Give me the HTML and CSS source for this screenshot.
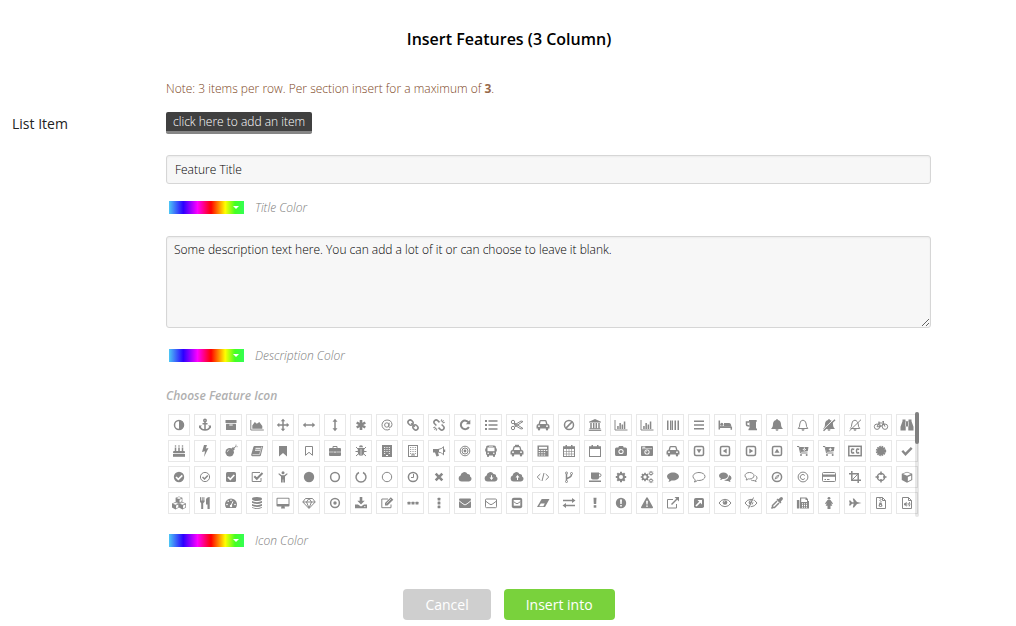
FILE: index.html
```
<!DOCTYPE html>
<html lang="en">
<head>
<meta charset="utf-8">
<meta name="viewport" content="width=device-width, initial-scale=1">
<title>Insert Features (3 Column)</title>
<link rel="stylesheet" href="styles.css">
</head>
<body>
<form class="dialog">
  <h1 class="dialog-title">Insert Features (3 Column)</h1>
  <div class="form-grid">
    <p class="note">Note: 3 items per row. Per section insert for a maximum of <strong>3</strong>.</p>
    <div class="row-label">List Item</div>
    <div class="fields">
      <button type="button" class="add-item">click here to add an item</button>
      <input class="text-field" type="text" aria-label="Feature title" value="Feature Title">
      <div class="color-row title-color">
        <button type="button" class="swatch" id="title-color" aria-labelledby="title-color-label"></button>
        <label class="hint" id="title-color-label" for="title-color">Title Color</label>
      </div>
      <textarea class="text-area" aria-label="Feature description">Some description text here. You can add a lot of it or can choose to leave it blank.</textarea>
      <div class="color-row description-color">
        <button type="button" class="swatch" id="desc-color" aria-labelledby="desc-color-label"></button>
        <label class="hint" id="desc-color-label" for="desc-color">Description Color</label>
      </div>
      <h2 class="picker-title">Choose Feature Icon</h2>
      <div class="picker">
        <div class="icon-grid" id="icon-grid"></div>
        <div class="scroll-track"><div class="scroll-thumb"></div></div>
      </div>
      <div class="color-row icon-color">
        <button type="button" class="swatch" id="icon-color" aria-labelledby="icon-color-label"></button>
        <label class="hint" id="icon-color-label" for="icon-color">Icon Color</label>
      </div>
    </div>
  </div>
  <div class="actions">
    <button type="button" class="btn btn-cancel">Cancel</button>
    <button type="button" class="btn btn-insert">Insert into</button>
  </div>
</form>
<script src="icons.js"></script>
</body>
</html>
```
FILE: styles.css
```
* { box-sizing: border-box; }
body {
  margin: 0;
  background: #fff;
  color: #222;
  font-family: "Open Sans", sans-serif;
  font-size: 12px;
  font-weight: 300;
}
button, input, textarea { font: inherit; margin: 0; }
.dialog { padding: 27px 0 6px; }
.dialog-title {
  margin: 0 0 27px;
  padding-left: 2px;
  text-align: center;
  font-size: 16px;
  line-height: 24px;
  font-weight: 600;
  color: #000;
}
.form-grid {
  display: grid;
  grid-template-columns: 154px minmax(0, 1fr);
  row-gap: 12px;
  padding: 0 85px 0 12px;
}
.note {
  grid-column: 2;
  margin: 0;
  line-height: 22px;
  color: #7c4522;
}
.note strong { font-weight: 700; color: #97694a; }
.row-label {
  font-size: 14px;
  font-weight: 400;
  line-height: 24px;
  color: #222;
}
.fields {
  display: flex;
  flex-direction: column;
  align-items: flex-start;
}
.add-item {
  height: 22px;
  padding: 0 7px;
  border: 0;
  border-bottom: 3px solid #868686;
  border-radius: 2px;
  background: #404040;
  color: #fff;
  line-height: 19px;
}
.text-field, .text-area {
  width: 100%;
  border: 1px solid #d6d6d6;
  border-radius: 3px;
  background: #f7f7f7;
  box-shadow: inset 0 1px 2px rgba(0, 0, 0, .05);
  color: #000;
  outline: none;
}
.text-field {
  height: 29px;
  margin-top: 21px;
  padding: 0 8px;
}
.text-area {
  display: block;
  height: 92px;
  margin-top: 18px;
  padding: 4px 7px;
  line-height: 18px;
  resize: vertical;
}
.color-row {
  display: flex;
  align-items: center;
  gap: 11px;
  height: 21px;
  padding-left: 3px;
}
.title-color, .icon-color { margin-top: 13px; }
.description-color { margin-top: 17px; }
.swatch {
  display: flex;
  align-items: center;
  justify-content: flex-end;
  width: 75px;
  height: 13px;
  padding: 0 5px;
  border: 0;
  background: linear-gradient(90deg, #4cc8f5 0%, #2a00ff 19%, #f0f 38%, #f00 56%, #ff0 75%, #4f2 88%, #3f5 100%);
}
.swatch::after {
  content: "";
  border: 3px solid transparent;
  border-top-color: #fff;
  border-bottom: 0;
}
.hint {
  font-style: italic;
  line-height: 21px;
  color: #7c7c7c;
}
.picker-title {
  margin: 19px 0 6px;
  font-size: 12px;
  line-height: 21px;
  font-style: italic;
  font-weight: 600;
  color: #b0b0b0;
}
.picker {
  position: relative;
  width: 100%;
  max-width: 753px;
  height: 105px;
  padding: 2px 1px 0 2px;
  overflow: hidden;
}
.icon-grid {
  display: grid;
  grid-template-columns: repeat(auto-fill, 22px);
  gap: 4px;
}
.icon-btn {
  display: grid;
  place-items: center;
  width: 22px;
  height: 22px;
  padding: 0;
  border: 1px solid #e8e8e8;
  background: #fff;
  color: #888;
}
.icon-btn svg { display: block; width: 14px; height: 14px; fill: currentColor; overflow: visible; }
.icon-btn .s { fill: none; stroke: currentColor; stroke-width: 1; }
.icon-btn .m { fill: none; stroke: currentColor; stroke-width: 1.5; }
.icon-btn .b { fill: none; stroke: currentColor; stroke-width: 2; }
.icon-btn .w { fill: #fff; }
.icon-btn .ws { fill: none; stroke: #fff; stroke-width: 1; }
.icon-btn .wt { fill: none; stroke: #fff; stroke-width: .6; }
.icon-btn .wm { fill: none; stroke: #fff; stroke-width: 1.7; }
.scroll-track {
  position: absolute;
  top: 0;
  right: 0;
  width: 4px;
  height: 100%;
  border-radius: 2px;
  background: rgba(60, 60, 60, .12);
}
.scroll-thumb { height: 32px; border-radius: 2px; background: #808080; }
.actions {
  display: flex;
  justify-content: center;
  gap: 13px;
  margin-top: 38px;
  padding-left: 2px;
}
.btn {
  height: 31px;
  padding: 0 22px;
  border: 0;
  border-radius: 4px;
  color: #fff;
  font-size: 14px;
  font-weight: 500;
}
.btn-cancel { background: #cfcfcf; }
.btn-insert { background: #79d23c; }
```
FILE: icons.js
```
// Each icon is drawn on a 14 x 14 grid. Classes: s/m/b = thin/medium/bold stroke,
// w = white fill, wt/ws/wm = white strokes.
const p = (d, c) => `<path d="${d}"${c ? ` class="${c}"` : ''}/>`;
const c = (x, y, r, k) => `<circle cx="${x}" cy="${y}" r="${r}"${k ? ` class="${k}"` : ''}/>`;
const r = (x, y, w, h, k, rx = 0) => `<rect x="${x}" y="${y}" width="${w}" height="${h}" rx="${rx}"${k ? ` class="${k}"` : ''}/>`;

const bell = 'M7 1c.6 0 .9.3.9.9C10 2.4 11 4 11 6c0 2.300 .6 3.500 1.700 4.500V11H1.300v-.5C2.400 9.500 3 8.300 3 6c0-2 1-3.600 3.100-4.100C6.100 1.300 6.400 1 7 1z';
const bellLine = p('M7 2.100Q3.800 2.600 3.800 6T2.200 10.500h9.600Q10.200 9 10.200 6T7 2.100z', 's');
const clapper = p('M5.500 11.300h3a1.500 1.500 0 0 1-3 0z');
const car = p('M3.300 3.200Q3.600 2 4.800 2h4.400q1.200 0 1.500 1.200l.8 2.800Q13.500 6.200 13.500 8v2.500h-1.300v.8q0 1.200-1.200 1.200t-1.200-1.200v-.8H4.200v.8q0 1.200-1.200 1.200t-1.200-1.200v-.8H.5V8q0-1.800 2-2z')
  + p('M4 6l.7-2.700h4.600L10 6z', 'w') + c(3, 8.2, .9, 'w') + c(11, 8.2, .9, 'w');
const cloud = p('M3.600 11.500a3.100 3.100 0 0 1-1-6A3.700 3.700 0 0 1 9.500 3.900a2.300 2.300 0 0 1 2.600 2.500A2.700 2.700 0 0 1 11 11.500z');
const chart = p('M1 2v10h12.500', 's') + r(3.2, 8, 1.5, 3) + r(5.400, 5, 1.5, 6) + r(7.600, 6.500, 1.5, 4.500) + r(9.800, 3.500, 1.5, 7.500);
const box = r(2.500, 2.500, 9, 9, 'm', 1.5);
const cart = p('M1 2.500h2l1.500 6.500h7', 's') + p('M3.500 3h9l-.7 4.300-7.300.7z') + c(5, 11, 1) + c(10.700, 11, 1);
const briefcase = r(1, 4, 12, 8, '', 1) + p('M5 4V2.500h4V4', 's') + p('M1 8h4.700M8.300 8H13', 'wt') + r(6.300, 7.500, 1.400, 1.200, 'w');
const cal = r(1.500, 3, 11, 9.500, 's') + r(1, 2.500, 12, 2.500) + r(3.500, 1, 1.500, 2.800) + r(9, 1, 1.500, 2.800);
const disc = c(7, 7, 5.200);
const ring = c(7, 7, 4.500, 'm');
const bubble = 'M7 2.500c3.300 0 6 1.700 6 4s-2.700 4-6 4q-.8 0-1.500-.1Q4 11.800 2.300 12q.9-1 1-2.200Q1 8.600 1 6.500c0-2.300 2.700-4 6-4z';
const doublebubble = ['M5.500 2.500c2.500 0 4.500 1.400 4.500 3.200S8 9 5.500 9l-1-.1Q3.500 9.900 2 10q.7-.8.8-1.700Q1 7.400 1 5.700c0-1.800 2-3.200 4.500-3.200z', 'M11 5q2.500 1 2.500 3 0 1.500-1.500 2.400.1 1 .8 1.600-1.700 0-2.600-1.100Q7.500 11.200 6 10q4.500 0 5-5z'];
const gear = (x, y, k) => `<g transform="translate(${x} ${y}) scale(${k})">` + c(0, 0, 3, 'b')
  + p('M0-5.200V-3M0 3v2.200M-5.200 0H-3M3 0h2.200M-3.700-3.700l1.600 1.600M2.100 2.100l1.600 1.600M-3.700 3.700l1.600-1.600M2.100-2.100l1.600-1.600', 'b') + '</g>';
const page = p('M2.500 1.500h6l3 3v8h-9zM8.500 1.500v3h3', 's');
const bike = c(3, 8.700, 2.700, 's') + c(11, 8.700, 2.700, 's') + p('M3 8.700L5 5h4.500L7 8.700zM9 3.500l2 5.200M8.500 3.500H10M5 5l2 3.700M4 4.200h2.200', 's');
const cube = (x, y, k) => `<g transform="translate(${x} ${y}) scale(${k})">` + p('M0-5l5 2v5.800L0 5.500l-5-2.700V-3z') + p('M-3.800-2.800L0-4.200l3.800 1.400L0-1.200z', 'w') + p('M.8 0L4-1.400v3.700L.8 4z', 'w') + '</g>';
const eye = p('M1 7q2.300-3.700 6-3.700T13 7q-2.300 3.700-6 3.700T1 7z', 's') + c(7, 6.500, 2.300) + p('M5.900 6.400q0-1.200 1.200-1.200', 'wt');

const icons = [
  ['adjust', c(7, 7, 4.500, 'm') + p('M7 2.500v9a4.500 4.500 0 0 0 0-9z')],
  ['anchor', c(7, 2.500, 1.200, 'm') + p('M7 4v8M4.500 5.700h5M2 8.500q.7 3.500 5 3.500t5-3.500', 'm') + p('M1 7.500h3L1 10.500zM13 7.500h-3l3 3z')],
  ['archive', r(1.500, 2, 11, 3) + r(2, 5.700, 10, 6.300, '', .5) + r(5.300, 6.500, 3.400, 1, 'w')],
  ['area chart', p('M.8 2v10h13', 's') + p('M2.300 10.800V7.500L4.800 4l2 1.800L9.300 4l3 4v2.800z')],
  ['arrows', p('M7 2.500v9M2.500 7h9', 'm') + p('M7 .8l2.300 2.500H4.700zM7 13.200l2.300-2.500H4.700zM.8 7l2.500-2.300v4.600zM13.200 7l-2.500-2.300v4.600z')],
  ['arrows horizontal', p('M3 7h8', 'm') + p('M.8 7l2.900-2.500v5zM13.200 7l-2.900-2.500v5z')],
  ['arrows vertical', p('M7 3v8', 'm') + p('M7 .8l2.500 2.900h-5zM7 13.200l2.500-2.900h-5z')],
  ['asterisk', `<path d="M7 2v10M2.700 4.500l8.600 5M11.300 4.500l-8.600 5" fill="none" stroke="currentColor" stroke-width="2.600"/>`],
  ['at', c(6.800, 7, 2.200, 's') + p('M9.200 4.700l-.5 3.500q0 1.200 1 1.200 2.300 0 2.300-3Q11.500 2 7 2a5 5 0 1 0 3 9', 's')],
  ['chain', `<g transform="rotate(45 7 7)">` + r(.8, 4.800, 5.400, 4.400, 'm', 2.2) + r(7.800, 4.800, 5.400, 4.400, 'm', 2.2) + p('M4.500 7h5', 'm') + '</g>'],
  ['chain broken', `<g transform="rotate(45 7 7)">` + p('M5.500 4.800H3a2.200 2.200 0 0 0 0 4.400h2.500M8.500 4.800H11a2.200 2.200 0 0 1 0 4.400H8.500', 'm') + p('M7 .5V3M9 1l-.8 2M5 1l.8 2M7 11v2.500M9 13l-.8-2M5 13l.8-2', 's') + '</g>'],
  ['rotate', p('M10.700 4.500A4.300 4.300 0 1 0 10.900 9', 'b') + p('M12.300 1.800v4.500H7.800z')],
  ['list', p('M4.500 3h9M4.500 7h9M4.500 11h9', 'm') + p('M1 3h2M1 7h2M1 11h2', 'b')],
  ['scissors', c(3, 4, 1.700, 's') + c(3, 10, 1.700, 's') + p('M4.500 5l8.500 5.500-2 .5L4.500 7zM4.500 9L13 3.500 11 3 4.500 7', 's')],
  ['car', car],
  ['ban', ring + p('M3.900 10.100l6.200-6.200', 'm')],
  ['bank', p('M7 1l6 2.700v.8H1v-.8z') + p('M3 5v5.500M5.700 5v5.500M8.300 5v5.500M11 5v5.500', 'm') + r(1.500, 10.200, 11, 1) + r(.8, 11.700, 12.400, 1.200)],
  ['bar chart', chart], ['bar chart outline', chart],
  ['barcode', `<path d="M1.500 2.500v9.500M4.500 2.500v9.500M6.500 2.500v9.500M9.500 2.500v9.500M12.500 2.500v9.500" class="s"/><path d="M2.500 2.500v9.500M5.500 2.500v9.500M8.500 2.500v9.500M11.500 2.500v9.500" class="s" opacity=".5"/>`],
  ['bars', p('M2 3.200h10M2 7h10M2 10.800h10', 'm')],
  ['bed', p('M1.300 2.500v9M.7 9.300h12.600v2.500', 'm') + c(3.800, 6.200, 1.500) + p('M6 5h5q2 0 2.300 3H6zM2 7.800h11v1H2z')],
  ['beer', p('M5 2h7.700v1.500l-.7.700v5.800l1 1V12.200H4.500V11l1-1V4.200L5 3.500z') + p('M5.500 4H2.500v2.500q0 1.500 3 1.500', 'm')],
  ['bell', p(bell) + clapper],
  ['bell outline', bellLine + clapper],
  ['bell slash', p(bell) + clapper + p('M1 11.800L12 1', 'ws') + p('M1.500 12.800L13 1.700', 'm')],
  ['bell slash outline', bellLine + clapper + p('M1 11.800L12 1', 'wt') + p('M1.500 12.800L13 1.700', 's')],
  ['bicycle', bike],
  ['binoculars', p('M2.500 1.500h3v1.800h3V1.500h3v1.800l2 5.500v3.700H8.300V8.500H5.700v4H.5V8.800l2-5.500z') + p('M5.500 3.500v5M8.500 3.500v5', 'wt')],

  ['birthday cake', r(1, 7, 12, 2.300, '', 1) + r(1, 10, 12, 2.800) + p('M3.500 3.500V7M7 3.500V7M10.500 3.500V7', 'm') + c(3.500, 2, .8) + c(7, 2, .8) + c(10.500, 2, .8)],
  ['bolt', p('M6 1h3L7.800 4.500l2.700-.5L6 13l1-5.700-3 .7z')],
  ['bomb', c(5.700, 8.300, 4.200) + p('M7.500 4.500l1.500-1.500 2 2L9.500 6.500z') + p('M10 4q1-1.800 2-1.300M12 .7v1M13.500 2.700h-1', 's') + p('M3.300 8q.2-2 2-2.200', 'wt')],
  ['book', p('M4.500 2h8.700l-2.400 9.500q-.2.800-1.200.8H2.300Q.8 12 1.300 10.300L3.300 3.200Q3.700 2 4.500 2z') + p('M5.500 4.300h5M5 6.200h5', 'ws') + p('M2.500 10.600h7l2.200-8', 'wt')],
  ['bookmark', p('M3 2h8v10.500L7 9l-4 3.500z')],
  ['bookmark outline', p('M3.500 2.500h7v8.800L7 8.300l-3.500 3z', 's')],
  ['briefcase', briefcase],
  ['bug', p('M5 3.200a2 2 0 0 1 4 0z') + p('M3.800 4h6.400v4q0 3.500-3.200 3.800Q3.800 11.500 3.800 8z') + p('M1.500 7.500H4M10 7.500h2.500M2 3l2 2M12 3l-2 2M2 12l2.200-2M12 12L9.800 10', 's') + p('M7 5v6.500', 'wt')],
  ['building', r(2, 1, 10, 12) + p('M4.200 3.500h1M6.500 3.500h1M8.800 3.500h1M4.200 5.500h1M6.500 5.500h1M8.800 5.500h1M4.200 7.500h1M6.500 7.500h1M8.800 7.500h1M4.200 9.500h1M8.800 9.500h1M6 11.500h2', 'ws')],
  ['building outline', r(2.500, 1.500, 9, 11, 's') + p('M4.200 3.500h1M6.500 3.500h1M8.800 3.500h1M4.200 5.500h1M6.500 5.500h1M8.800 5.500h1M4.200 7.500h1M6.500 7.500h1M8.800 7.500h1M4.200 9.500h1M8.800 9.500h1M6 12v-2h2v2', 's')],
  ['bullhorn', p('M1 5h5q3.500 0 6-3v9.500q-2.500-3-6-3l1 3.300-2.500.7L3 8.500H1z') + p('M7 5.700q2.300-.3 4-2v6q-1.700-1.700-4-2z', 'w') + r(12, 5.500, 1.200, 2.500)],
  ['bullseye', c(7, 7, 4.800, 's') + c(7, 7, 3, 's') + c(7, 7, 1.400)],
  ['bus', r(2, 1.500, 10, 10, '', 2) + r(3.500, 3.500, 7, 3.700, 'w') + r(5, 2.200, 4, .5, 'w') + c(4.200, 9.300, .8, 'w') + c(9.800, 9.300, .8, 'w') + r(3, 11, 2, 1.800) + r(9, 11, 2, 1.800) + r(1.200, 4.500, 1, 3) + r(11.800, 4.500, 1, 3)],
  ['taxi', r(5, .8, 4, 2) + car],
  ['calculator', r(1.500, 1.500, 11, 11) + r(3, 2.800, 8, 2, 'w') + p('M2.700 6.500h1.500M5.200 6.500h1.500M7.700 6.500h1.500M10.200 6.500h1.200M2.700 8.700h1.500M5.200 8.700h1.500M7.700 8.700h1.500M2.700 11h1.500M5.200 11h1.500M7.700 11h1.500', 'ws')],
  ['calendar', cal + `<path d="M2 7.500h10M2 10h10M4.500 5v7M7 5v7M9.500 5v7" fill="none" stroke="currentColor" stroke-width=".6"/>`],
  ['calendar outline', cal],
  ['camera', p('M2.500 3.500h1.800L5 2h4l.7 1.500h1.800Q13 3.500 13 5v5.500q0 1.500-1.500 1.500h-9Q1 12 1 10.500V5q0-1.500 1.500-1.500z') + c(7, 7.500, 2.600, 'w') + c(7, 7.500, 1.600)],
  ['camera retro', r(1, 2, 12, 10, '', 1) + p('M2 4.700h10', 'wt') + r(2.300, 2.700, 3, 1, 'w') + c(7, 8, 2.600, 'w') + c(7, 8, 1.700) + p('M6 8q0-1 1-1', 'wt')],
  ['automobile', car],
  ['caret square down', box + p('M4.500 5.300h5L7 9.200z')],
  ['caret square left', box + p('M8.700 4.500v5L4.800 7z')],
  ['caret square right', box + p('M5.300 4.500v5L9.200 7z')],
  ['caret square up', box + p('M4.500 8.700h5L7 4.800z')],
  ['cart arrow down', cart + p('M8.300 3.500v2M6.800 5l1.500 1.500L9.800 5', 'ws')],
  ['cart plus', cart + p('M8.300 3.800v3M6.800 5.300h3', 'ws')],
  ['closed captions', r(.8, 2.300, 12.400, 9.400, 'm') + p('M6.200 5.500Q3.500 3.800 3.500 7t2.700 1.500M11.200 5.500Q8.500 3.800 8.500 7t2.700 1.500', 'm')],
  ['certificate', `<circle cx="7" cy="7" r="4"/><circle cx="7" cy="7" r="4.200" fill="none" stroke="currentColor" stroke-width="2" stroke-dasharray="1.500 .7"/>`],
  ['check', `<path d="M2.300 6.800l3.200 3.400 6.200-6.400" fill="none" stroke="currentColor" stroke-width="2.400"/>`],

  ['check circle', disc + p('M4 7l2.300 2.300 4-4', 'wm')],
  ['check circle outline', c(7, 7, 4.600, 's') + p('M4.500 7l2 2 3.300-3.500', 'm')],
  ['check square', r(2, 2, 10, 10, '', 1.500) + p('M4 7l2.300 2.300 4-4.300', 'wm')],
  ['check square outline', p('M11 8v3.500H2.200v-9H10', 's') + p('M4.300 6.300l2.500 2.500L12.500 3', 'b')],
  ['child', c(7, 2.700, 1.500) + p('M3 3.200l2.700 2h2.600l2.700-2 .7.900L9 6.500v6H7.300V9.500h-.6v3H5v-6L2.300 4.100z')],
  ['circle', disc], ['circle outline', c(7, 7, 4.400, 'm')],
  ['circle notch', p('M5 2.500a5 5 0 1 0 4 0', 'm')],
  ['circle thin', c(7, 7, 4.700, 's')],
  ['clock', c(7, 7, 4.600, 'm') + p('M7.500 4v3.500H5', 's')],
  ['close', `<path d="M3.700 3.700l6.600 6.600M10.300 3.700l-6.600 6.600" fill="none" stroke="currentColor" stroke-width="2.600"/>`],
  ['cloud', cloud],
  ['cloud download', cloud + p('M7 5.200h1v2.300h1.500L7.500 10 5.500 7.500H7z', 'w')],
  ['cloud upload', cloud + p('M7 10h1V7.500h1.500L7.500 5l-2 2.500H7z', 'w')],
  ['code', p('M4.300 4L1.200 7l3.100 3M9.700 4l3.100 3-3.100 3M8 3L6 11', 's')],
  ['code fork', c(4.500, 3, 1, 's') + c(9.500, 3.500, 1, 's') + c(4.500, 11.500, 1, 's') + p('M4.500 4v6.500M9.500 4.500q0 2.500-4.500 4', 'm')],
  ['coffee', p('M3 2.500h8v5.200q0 1.800-1.800 1.800H4.800Q3 9.500 3 7.700z') + p('M11 3.700h.7q1.300 0 1.300 1.600T11 7', 's') + r(1, 10.500, 12, 1.500)],
  ['gear', gear(7, 7, 1)],
  ['gears', gear(5, 7, .82) + gear(11, 3.300, .46) + gear(11, 10.700, .46)],
  ['comment', p(bubble)], ['comment outline', p(bubble, 's')],
  ['comments', doublebubble.map(d => p(d)).join('')],
  ['comments outline', p(doublebubble[0], 's') + p('M11.500 5.500q1.700 1 1.500 2.700-.2 1.300-1.500 2l.7 1.300q-1.200-.2-2-.9-1.700.2-3-.5', 's')],
  ['compass', c(7, 7, 4.600, 'm') + p('M9.700 4.300L8 8l-3.700 1.700L6 6z') + c(7, 7, .7, 'w')],
  ['copyright', c(7, 7, 4.900, 's') + p('M8.800 5.500a2.500 2.500 0 1 0 0 3', 's')],
  ['credit card', r(.5, 2.500, 13, 9, 's', 1) + r(.5, 4.500, 13, 2.300) + p('M2.500 9.500h1.500M5 9.500h2.500', 's')],
  ['crop', p('M3.800 1v9.200H13M1 3.800h9.200V13', 'm') + p('M4 10l6-6', 's')],
  ['crosshairs', c(7, 7, 3.600, 'm') + p('M7 1.500v3.500M7 9v3.500M1.500 7H5M9 7h3.500', 'm')],
  ['cube', cube(7, 7, 1.050)],

  ['cubes', cube(7, 3.800, .68) + cube(3.500, 9.600, .7) + cube(10.500, 9.600, .7)],
  ['cutlery', p('M4.200 6v7', 'b') + p('M2.500 1.200v4.500M4.200 1.200v4.500M5.900 1.200v4.500', 's') + p('M2 4.500h4.400v1.500L4.200 8 2 6z') + p('M11.700 1v12H9.500V8.500H8V3.500Q8.500 1 11.700 1z')],
  ['dashboard', p('M2.200 12A6 6 0 1 1 11.800 12z') + c(3, 8.500, .8, 'w') + c(4.200, 5.300, .8, 'w') + c(7, 4.200, .8, 'w') + c(11, 8.500, .8, 'w') + p('M7 9.800l2-4.500', 'ws') + c(7, 10, 1.200, 'w')],
  ['database', '<ellipse cx="7" cy="3" rx="5" ry="1.900"/>' + p('M2 5q5 2.300 10 0v1.700q-5 2.600-10 0zM2 8q5 2.300 10 0v1.700q-5 2.600-10 0zM2 11q5 2.300 10 0v.8q-5 2.600-10 0z')],
  ['desktop', r(.5, 1.700, 13, 8.800, '', 1) + r(1.500, 2.700, 11, 5.300, 'w') + p('M5.500 10h3l.5 2.500H5z')],
  ['diamond', p('M3.500 2.500h7l2.700 3.500L7 12.500.8 6zM.8 6h12.400M4.500 6L7 12l2.500-6L7 2.500z', 's')],
  ['dot circle', c(7, 7, 4.400, 'm') + c(7, 7, 1.700)],
  ['download', p('M5.700 1h2.600v3.700h2.400L7 8.500 3.300 4.700h2.400z') + p('M1 8.500h3l3 2 3-2h3v3.800H1z') + r(10, 10.300, 1.500, .8, 'w')],
  ['edit', p('M11 8.500v3.200H1.800V3H8', 's') + p('M5 9.500V7l5.800-5.700 2.500 2.400L7.500 9.500z') + p('M6.500 7.500L11 3', 'wt')],
  ['ellipsis horizontal', r(1.500, 5.700, 3, 2.700, '', .5) + r(5.500, 5.700, 3, 2.700, '', .5) + r(9.500, 5.700, 3, 2.700, '', .5)],
  ['ellipsis vertical', r(5.600, 1.700, 2.800, 2.800, '', .5) + r(5.600, 5.600, 2.800, 2.800, '', .5) + r(5.600, 9.500, 2.800, 2.800, '', .5)],
  ['envelope', r(1, 2.500, 12, 9.500, '', 1) + p('M.8 4.500Q5.800 8.800 7 8.800t6.200-4.300', 'ws')],
  ['envelope outline', r(1.500, 3, 11, 8.700, 's', 1) + p('M1.500 5Q6 8.700 7 8.700T12.500 5', 's')],
  ['envelope square', r(1.800, 1.800, 10.400, 10.400, '', 2) + r(3.700, 4, 6.600, 5.700, 'w') + p('M3.700 5.700q2.700 2 3.300 2t3.300-2', 's')],
  ['eraser', p('M5.700 3H13.500L9 11H1z') + p('M4.800 7.500h4l-1.500 2.700H3.200z', 'w')],
  ['exchange', p('M1 4.500h10M3 9.500h10', 'm') + p('M10 2l3.500 2.500L10 7zM4 7L.5 9.500 4 12z')],
  ['exclamation', p('M5.500 1.700h3L8.200 8H5.800z') + r(5.700, 9.200, 2.600, 2.500)],
  ['exclamation circle', disc + p('M6 3.500h2L7.700 8H6.300z', 'w') + r(6.200, 9, 1.600, 1.500, 'w')],
  ['warning', p('M7 1.300q.6 0 .9.600l5 9q.5 1.300-.8 1.400H1.900Q.6 12.200 1.100 10.900l5-9q.3-.6.9-.6z') + p('M6.100 4.700h1.800L7.600 8.500H6.400z', 'w') + r(6.200, 9.500, 1.600, 1.300, 'w')],
  ['external link', p('M10.500 8v4h-9V3.500H7', 's') + p('M5.500 8.500L11 3', 'm') + p('M8.500 1H13v4.500z')],
  ['external link square', r(2, 2, 10, 10, '', 1.800) + p('M4 10l4-4', 'wm') + p('M5.500 4H10v4.500z', 'w')],
  ['eye', eye],
  ['eye slash', eye + p('M5.300 12.500L10.300 1.500', 'ws') + p('M4.500 12.500L9.500 1.500', 's')],
  ['eyedropper', p('M12.500 1.500q1 1.200 0 2.300L10.800 5.500l.7.700-1.300 1.300-3.700-3.700 1.300-1.300.7.700 1.700-1.700q1.200-1 2.300 0z') + p('M7 5L2.500 9.500v1.700L1.500 12.500l1.300-1h1.700L9 7', 'm')],
  ['fax', r(.9, 4, 2.500, 8.500, '', .5) + p('M4 1.500h6.500l1.500 1.800V5h1v7.500H4z') + p('M5.200 2.500h4.300v1.500H11v2H5.200z', 'w') + p('M6 7.800h1M8 7.800h1M10 7.800h1M6 9.500h1M8 9.500h1M10 9.500h1M6 11.200h1M8 11.200h1M10 11.200h1', 'ws')],
  ['female', c(7, 2.300, 1.400) + p('M5.500 4h3L11 7.500l-1 .7L8.700 6.500 10.300 9.800H8.500V13h-3V9.800H3.700l1.600-3.300L4 8.200l-1-.7z')],
  ['fighter jet', p('M1 4.500h1.500L4 6.200h1.700L4.800 2.500H6L9 6l4.500 1L9 8l-3 3.500H4.800l.9-3.700H4L2.500 9.500H1l.7-2.500z')],
  ['archive file', page + p('M6 2v1M7 3v1M6 4v1M7 5v1', 's') + p('M5.500 6.500h2l1 3.500q-2 2.200-4 0z') + c(6.500, 9.500, .7, 'w')],
  ['audio file', page + p('M4 7.200h1L6.700 5.700v5L5 9.300H4z') + p('M8 7q.7 1.200 0 2.500M9.300 6q1.200 2.200 0 4.400', 's')],
];

const grid = document.getElementById('icon-grid');
grid.innerHTML = icons.map(([name, art]) =>
  `<button type="button" class="icon-btn" aria-label="${name}"><svg viewBox="0 0 14 14" aria-hidden="true">${art}</svg></button>`
).join('');
```
